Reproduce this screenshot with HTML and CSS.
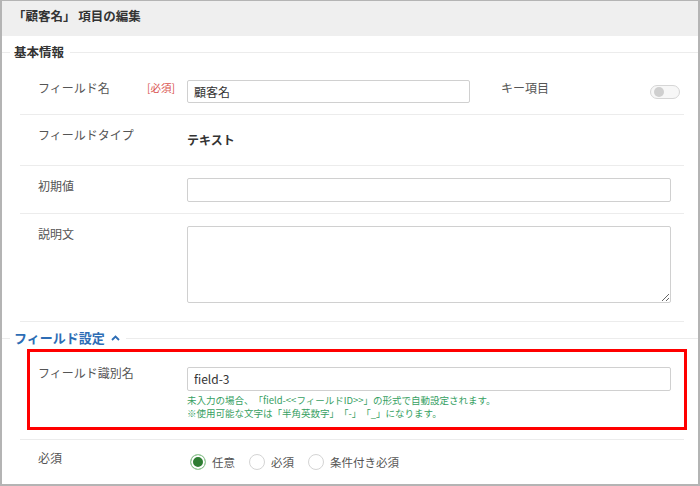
FILE: index.html
```html
<!DOCTYPE html>
<html lang="ja">
<head>
    <meta charset="UTF-8">
    <title>項目の編集</title>
    <link rel="stylesheet" href="styles.css">
</head>
<body>
    <div class="panel">
        <header class="panel-header">
            <h1>「顧客名」 項目の編集</h1>
        </header>

        <!-- 基本情報 -->
        <div class="section-title"><span>基本情報</span></div>
        <div class="rows">
            <div class="row">
                <div class="label">フィールド名</div>
                <div class="tag">[必須]</div>
                <input class="input input-short" type="text" value="顧客名">
                <div class="key-label">キー項目</div>
                <div class="toggle"><span class="knob"></span></div>
            </div>
            <div class="row row-type">
                <div class="label">フィールドタイプ</div>
                <div class="tag"></div>
                <div class="value">テキスト</div>
            </div>
            <div class="row">
                <div class="label">初期値</div>
                <div class="tag"></div>
                <input class="input" type="text">
            </div>
            <div class="row row-text">
                <div class="label">説明文</div>
                <div class="tag"></div>
                <textarea class="input textarea"></textarea>
            </div>
        </div>

        <!-- フィールド設定 -->
        <div class="section-title section-blue">
            <span>フィールド設定
                <svg class="chevron" width="9" height="6" viewBox="0 0 9 6"><polyline points="1,5 4.5,1.5 8,5" fill="none" stroke="#2d6db5" stroke-width="1.8"/></svg>
            </span>
        </div>
        <div class="highlight">
            <div class="row row-plain">
                <div class="label">フィールド識別名</div>
                <div class="tag"></div>
                <div class="field">
                    <input class="input" type="text" value="field-3">
                    <p class="hint">未入力の場合、「field-&lt;&lt;フィールドID&gt;&gt;」の形式で自動設定されます。<br>※使用可能な文字は「半角英数字」「-」「_」になります。</p>
                </div>
            </div>
        </div>
        <div class="rows">
            <div class="row row-radio">
                <div class="label">必須</div>
                <div class="tag"></div>
                <div class="radios">
                    <label class="radio"><span class="circle checked"></span>任意</label>
                    <label class="radio"><span class="circle"></span>必須</label>
                    <label class="radio"><span class="circle"></span>条件付き必須</label>
                </div>
            </div>
        </div>
    </div>
</body>
</html>
```

FILE: styles.css
```css
body {
    margin: 0;
    padding: 0;
    font-family: "Noto Sans CJK JP", "Liberation Sans", sans-serif;
    color: #555;
    background-color: white;
    text-spacing-trim: space-all;
}

.panel {
    width: 700px;
    height: 486px;
    box-sizing: border-box;
    border: 2px solid #b4b4b4;
    border-top-width: 1px;
    overflow: hidden;
}

.panel-header {
    height: 35px;
    background-color: #efefef;
}

.panel-header h1 {
    margin: 0;
    padding-left: 11px;
    font-size: 12.5px;
    line-height: 29px;
    color: #333;
    font-weight: bold;
}

/* section title with a line through it */
.section-title {
    display: flex;
    align-items: center;
    height: 32px;
}

.section-title::before {
    content: "";
    width: 8px;
    border-top: 1px solid #ececec;
}

.section-title::after {
    content: "";
    flex: 1;
    border-top: 1px solid #ececec;
}

.section-title span {
    padding: 0 6px 0 4px;
    font-size: 12.5px;
    font-weight: bold;
    color: #333;
    line-height: 16px;
}

.section-blue {
    height: 27px;
    padding-top: 5px;
    box-sizing: border-box;
    align-items: center;
}

.section-blue span {
    color: #2d6db5;
    font-size: 13px;
}

.chevron {
    margin-left: 3px;
    vertical-align: 2px;
}

.rows {
    margin: 0 14px 0 18px;
}

.row {
    display: flex;
    align-items: flex-start;
    padding: 12px 13px 11px 18px;
    border-bottom: 1px solid #ececec;
}

.label {
    width: 109px;
    flex-shrink: 0;
    font-size: 12px;
    line-height: 16px;
    color: #555;
}

.tag {
    width: 40px;
    flex-shrink: 0;
    font-size: 10.5px;
    line-height: 16px;
    color: #d9534f;
}

.input {
    flex: 1;
    height: 24px;
    box-sizing: border-box;
    margin: 0;
    padding: 0 6px;
    border: 1px solid #d0d0d0;
    border-radius: 2px;
    font-family: inherit;
    font-size: 12px;
    color: #333;
    background-color: white;
}

.input-short {
    flex: none;
    width: 283px;
    height: 23px;
}

.key-label {
    flex: 1;
    margin-left: 31px;
    font-size: 12px;
    line-height: 16px;
}

.toggle {
    position: relative;
    width: 30px;
    height: 14px;
    box-sizing: border-box;
    margin: 5px -9px 0 0;
    border: 1px solid #d6d6d6;
    border-radius: 8px;
    background-color: #f7f7f7;
}

.knob {
    position: absolute;
    left: 3px;
    top: 1px;
    width: 10px;
    height: 10px;
    border-radius: 50%;
    background-color: #cfcfcf;
}

.row-type {
    padding-bottom: 17px;
}

.value {
    margin-top: 5px;
    font-size: 12px;
    line-height: 16px;
    font-weight: bold;
    color: #333;
}

.row-text {
    padding-bottom: 18px;
}

.textarea {
    height: 77px;
    resize: vertical;
}

/* red annotation box */
.highlight {
    margin: 0 11px 9px 25px;
    border: 3px solid #f00;
}

.row-plain {
    padding: 13px 13px 7px 8px;
    border-bottom: none;
}

.field {
    flex: 1;
}

.field .input {
    width: 100%;
}

.hint {
    margin: 3px 0 0 0;
    font-size: 9.5px;
    line-height: 13px;
    color: #36a062;
}

.row-radio {
    border-top: 1px solid #ececec;
    border-bottom: none;
    padding-top: 10px;
}

.radios {
    display: flex;
    gap: 14px;
    margin: 4px 0 0 3px;
}

.radio {
    display: flex;
    align-items: center;
    font-size: 11.5px;
    line-height: 16px;
    color: #555;
}

.circle {
    width: 16px;
    height: 16px;
    box-sizing: border-box;
    margin-right: 6px;
    border: 1px solid #d4d4d4;
    border-radius: 50%;
    background-color: white;
}

.circle.checked {
    border: 1px solid #9ccf9f;
    background-color: #2e7d32;
    box-shadow: inset 0 0 0 2px white;
}
```
